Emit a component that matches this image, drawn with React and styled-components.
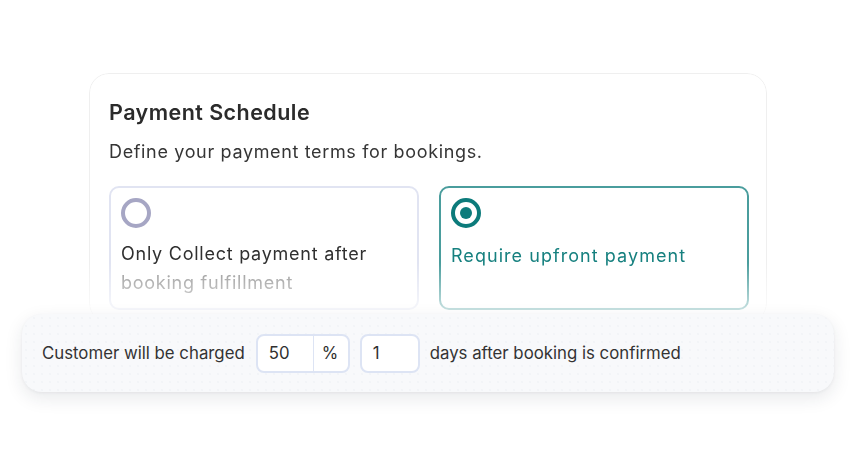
import styled, { createGlobalStyle } from "styled-components";

const GlobalStyle = createGlobalStyle`
  html, body {
    margin: 0;
    padding: 0;
    background: #ffffff;
  }
  body {
    font-family: "Inter", "Liberation Sans", sans-serif;
    -webkit-font-smoothing: antialiased;
  }
`;

const Page = styled.div`
  width: 855px;
  height: 466px;
  padding-top: 73px;
  box-sizing: border-box;
  overflow: hidden;
`;

const Card = styled.section`
  margin-left: 89px;
  width: 678px;
  height: 250px;
  box-sizing: border-box;
  padding: 24px 18px 0 19px;
  border: 1px solid #efefef;
  border-radius: 20px;
  background: #fff;
  -webkit-mask-image: linear-gradient(to bottom, #000 76%, rgba(0, 0, 0, 0.3) 95%, transparent 100%);
  mask-image: linear-gradient(to bottom, #000 76%, rgba(0, 0, 0, 0.3) 95%, transparent 100%);
`;

const Title = styled.h2`
  margin: 0;
  font-size: 21.5px;
  font-weight: 600;
  line-height: 28px;
  color: #2b2b2b;
  letter-spacing: 0.45px;
`;

const Subtitle = styled.p`
  margin: 14px 0 0;
  font-size: 18px;
  line-height: 24px;
  letter-spacing: 0.65px;
  color: #353535;
`;

const Options = styled.div`
  display: grid;
  grid-template-columns: 310px 310px;
  gap: 20px;
  margin-top: 22px;
`;

const Option = styled.div`
  height: 124px;
  box-sizing: border-box;
  padding: 10px 12px 0 10px;
  border: 2px solid ${(p) => (p.$active ? "#4a9d9d" : "#e1e4f2")};
  border-radius: 10px;
  background: #fff;
`;

const Radio = styled.span`
  display: block;
  width: 30px;
  height: 30px;
  box-sizing: border-box;
  border-radius: 50%;
  border: 4px solid ${(p) => (p.$active ? "#0c7b7b" : "#a6a6c4")};
  position: relative;

  &::after {
    content: "";
    display: ${(p) => (p.$active ? "block" : "none")};
    position: absolute;
    left: 50%;
    top: 50%;
    width: 12px;
    height: 12px;
    margin: -6px 0 0 -6px;
    border-radius: 50%;
    background: #0c7b7b;
  }
`;

const OptionText = styled.div`
  margin-top: ${(p) => (p.$active ? "13px" : "11px")};
  font-size: 18px;
  line-height: 29px;
  letter-spacing: ${(p) => (p.$active ? "1.05px" : "0.75px")};
  color: ${(p) => (p.$active ? "#16807f" : "#303030")};
`;

const Muted = styled.span`
  color: #959595;
`;

const Bar = styled.div`
  position: relative;
  z-index: 1;
  margin: -9px 0 0 22px;
  width: 812px;
  height: 78px;
  box-sizing: border-box;
  padding: 0 20px;
  display: flex;
  align-items: center;
  gap: 10px;
  border-radius: 20px;
  background-color: #f8f9fb;
  background-image: radial-gradient(#eceef2 0.6px, transparent 0.8px);
  background-size: 8px 8px;
  box-shadow: 0 6px 18px rgba(30, 40, 60, 0.1), 0 1px 3px rgba(30, 40, 60, 0.05);
  font-size: 16.8px;
  color: #333;
`;

const Label = styled.span`
  margin-right: ${(p) => p.$gap || 0}px;
`;

const InputGroup = styled.div`
  display: flex;
  height: 39px;
  box-sizing: border-box;
  border: 2px solid #dde4f4;
  border-radius: 8px;
  background: #fff;
  overflow: hidden;
`;

const Cell = styled.span`
  display: flex;
  align-items: center;
  width: ${(p) => p.$w}px;
  box-sizing: border-box;
  padding-left: ${(p) => p.$pad}px;
  border-left: ${(p) => (p.$divider ? "1.5px solid #dde4f4" : "none")};
  font-size: 16.8px;
  color: #2f2f2f;
`;

export default function App() {
  return (
    <Page>
      <GlobalStyle />
      <Card>
        <Title>Payment Schedule</Title>
        <Subtitle>Define your payment terms for bookings.</Subtitle>
        <Options>
          <Option>
            <Radio />
            <OptionText>
              Only Collect payment after
              <br />
              <Muted>booking fulfillment</Muted>
            </OptionText>
          </Option>
          <Option $active>
            <Radio $active />
            <OptionText $active>Require upfront payment</OptionText>
          </Option>
        </Options>
      </Card>
      <Bar>
        <Label $gap={1}>Customer will be charged</Label>
        <InputGroup>
          <Cell $w={55} $pad={11}>50</Cell>
          <Cell $w={35} $pad={8} $divider>%</Cell>
        </InputGroup>
        <InputGroup>
          <Cell $w={56} $pad={11}>1</Cell>
        </InputGroup>
        <Label>days after booking is confirmed</Label>
      </Bar>
    </Page>
  );
}
